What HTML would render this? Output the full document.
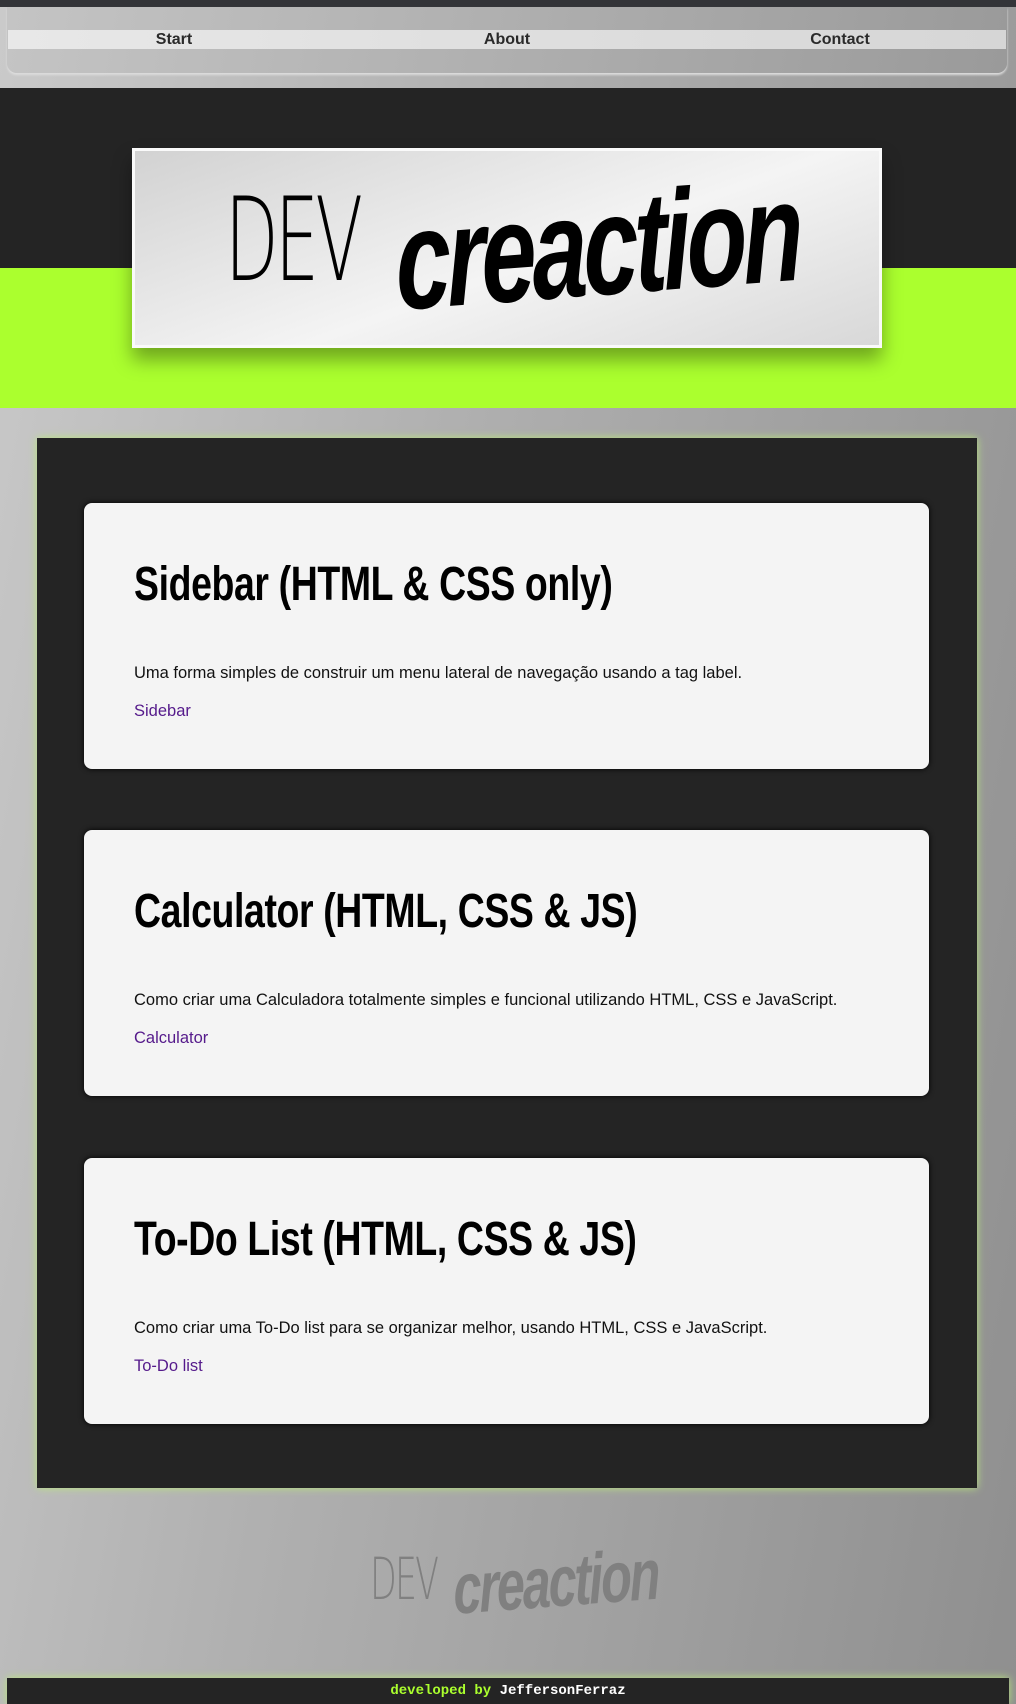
<!DOCTYPE html>
<html><head><meta charset="utf-8"><style>
*{margin:0;padding:0;box-sizing:border-box}
html,body{width:1016px;height:1704px;overflow:hidden}
body{background:linear-gradient(100deg,#cacaca 0%,#b0b0b0 40%,#8f8f8f 100%);font-family:"Liberation Sans",sans-serif;position:relative}
.topbar{position:absolute;left:0;top:0;width:1016px;height:7px;background:#333438}
.nav{position:absolute;left:7px;top:7px;width:1000px;height:66px;border-radius:0 0 10px 10px;background:linear-gradient(100deg,#c4c4c4,#9a9a9a);box-shadow:0 2px 2px #ddd}
.strip{position:absolute;left:8px;top:30px;width:998px;height:19px;background:linear-gradient(90deg,#e8e8e8,#d6d6d6)}
.strip span{position:absolute;top:0;font-size:16px;font-weight:bold;line-height:19px;color:#2a2a2a;transform:translateX(-50%)}
.head{position:absolute;left:0;top:88px;width:1016px;height:180px;background:#242424}
.green{position:absolute;left:0;top:268px;width:1016px;height:140px;background:#abff2e}
.logo{position:absolute;left:132px;top:148px;width:750px;height:200px;border:3px solid #fafafa;background:linear-gradient(160deg,#d2d2d2 0%,#eee 45%,#f4f4f4 55%,#d8d8d8 100%);box-shadow:0 12px 18px rgba(0,0,0,.35);overflow:hidden}
.dev{position:absolute;font-family:"DejaVu Sans","Liberation Sans",sans-serif;font-weight:200;transform-origin:0 0;line-height:1}
.cr{position:absolute;font-family:"Liberation Sans",sans-serif;font-weight:bold;font-style:italic;transform-origin:0 0;line-height:1}
.main{position:absolute;left:37px;top:438px;width:940px;height:1050px;background:#242424;box-shadow:0 0 8px #b8e67a}
.card{position:absolute;left:47px;width:845px;height:266px;background:#f4f4f4;border-radius:8px;box-shadow:0 0 6px #000}
.card h2{position:absolute;left:50px;top:54px;font-size:48px;font-weight:bold;color:#000;white-space:nowrap;transform:scaleX(.78);transform-origin:0 0;letter-spacing:-0.5px}
.card p{position:absolute;left:50px;top:161px;font-size:16.5px;color:#111;white-space:nowrap}
.card a{position:absolute;left:50px;top:199px;font-size:16.5px;color:#551a8b;text-decoration:none}
.foot{position:absolute;left:7px;top:1678px;width:1002px;height:26px;background:#242424;box-shadow:0 0 8px #b8e67a;text-align:center;font-family:"Liberation Mono",monospace;font-weight:bold;font-size:14px;line-height:26px;color:#abff2e}
.foot b{color:#fff}
</style></head><body>
<div class="topbar"></div>
<div class="nav"></div>
<div class="strip"><span style="left:166px">Start</span><span style="left:499px">About</span><span style="left:832px">Contact</span></div>
<div class="head"></div>
<div class="green"></div>
<div class="logo">
 <div class="dev" style="left:90px;top:32px;font-size:116px;transform:scaleX(.6);letter-spacing:-6px;color:#000">DEV</div>
 <div class="cr" style="left:258px;top:40px;font-size:142px;transform:scaleX(.7) rotate(-3deg);color:#000;letter-spacing:-6px">creaction</div>
</div>
<div class="main">
 <div class="card" style="top:65px"><h2>Sidebar (HTML &amp; CSS only)</h2><p>Uma forma simples de construir um menu lateral de navegação usando a tag label.</p><a>Sidebar</a></div>
 <div class="card" style="top:392px"><h2>Calculator (HTML, CSS &amp; JS)</h2><p>Como criar uma Calculadora totalmente simples e funcional utilizando HTML, CSS e JavaScript.</p><a>Calculator</a></div>
 <div class="card" style="top:720px"><h2>To-Do List (HTML, CSS &amp; JS)</h2><p>Como criar uma To-Do list para se organizar melhor, usando HTML, CSS e JavaScript.</p><a>To-Do list</a></div>
</div>
<div style="position:absolute;left:370px;top:1544px;width:290px;height:80px">
 <div class="dev" style="left:0;top:6px;font-size:58px;transform:scaleX(.6);letter-spacing:-3px;color:#808080">DEV</div>
 <div class="cr" style="left:82px;top:10px;font-size:72px;transform:scaleX(.7) rotate(-3deg);color:#808080;letter-spacing:-3px">creaction</div>
</div>
<div class="foot">developed by <b>JeffersonFerraz</b></div>
</body></html>
